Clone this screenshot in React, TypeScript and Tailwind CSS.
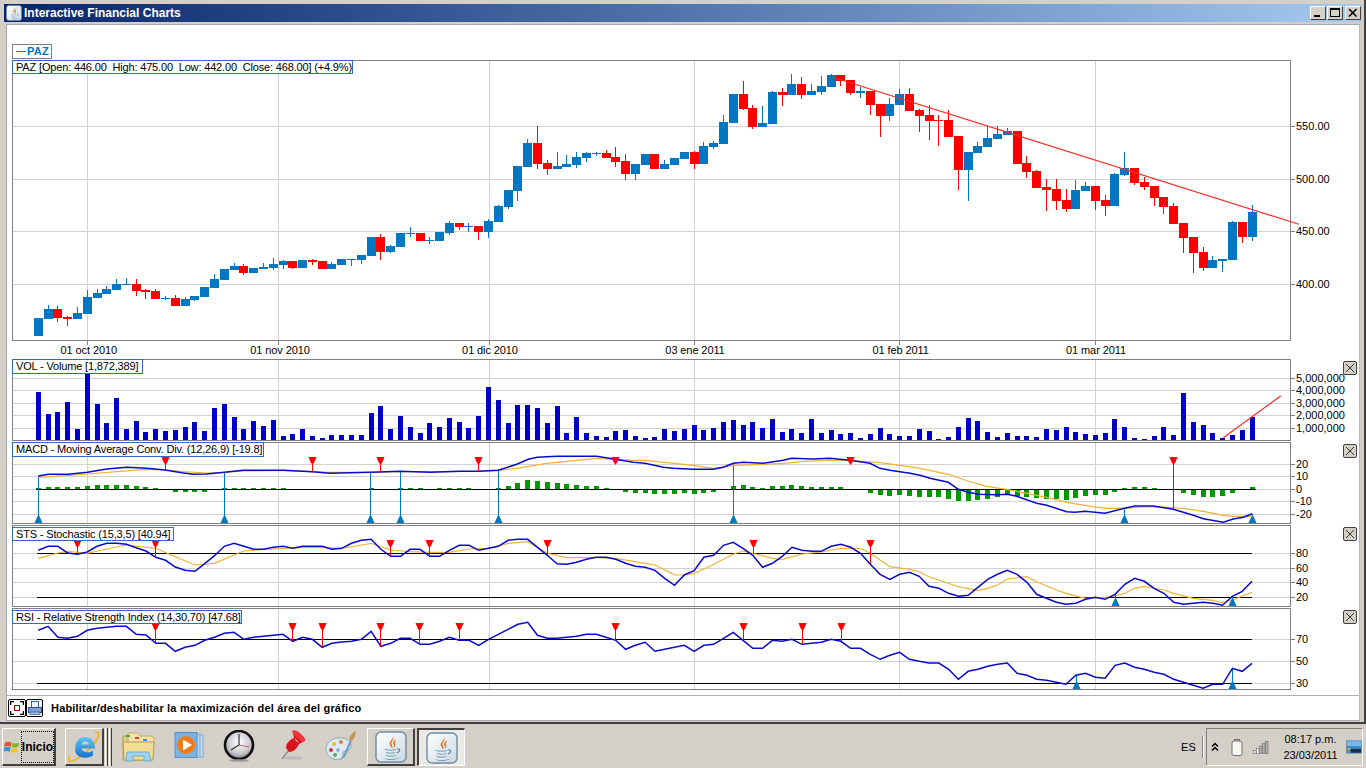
import React from "react";

const X = (i: number) => 38.3 + 9.788 * i;

// candles: colour, wick top, body top, body bottom, wick bottom (y in 3x units from y=60)
const candles: [string, number, number, number, number][] = [
["b",774,774,828,828],["b",735,747,777,777],["r",738,747,774,785],["r",768,771,777,798],["b",741,759,777,777],
["b",690,711,762,762],["b",687,699,714,714],["b",678,687,702,702],["b",657,672,690,690],["b",654,672,675,675],
["r",657,672,693,708],["r",687,690,696,717],["r",687,693,717,717],["b",708,714,717,720],["r",705,714,738,738],
["b",712,717,738,738],["b",708,708,720,723],["b",681,681,711,711],["b",642,657,684,684],["b",627,627,660,660],
["b",609,618,630,630],["r",612,618,639,645],["b",624,624,639,639],["b",609,621,627,627],["b",594,612,624,630],
["b",600,603,615,627],["r",603,603,624,627],["b",600,600,624,624],["r",597,600,606,615],["r",603,603,627,627],
["b",606,612,627,627],["b",597,597,615,615],["b",597,597,600,618],["b",585,585,600,612],["b",531,531,588,588],
["r",522,531,576,600],["b",555,558,576,579],["b",519,519,561,561],["b",501,519,522,531],["r",519,519,543,543],
["b",531,540,543,552],["b",516,516,543,543],["b",483,489,519,525],["r",489,489,501,510],["b",489,498,501,516],
["r",498,498,516,540],["b",477,483,516,534],["b",435,438,486,486],["b",390,390,441,447],["b",318,318,393,423],
["b",237,249,321,321],["r",198,249,312,327],["r",300,309,327,345],["b",276,318,327,327],["b",285,312,321,321],
["b",276,291,315,324],["b",276,279,294,306],["b",276,279,282,288],["r",270,279,294,294],["r",261,291,306,321],
["r",282,303,342,360],["b",312,312,342,360],["b",282,282,315,315],["r",282,282,327,327],["b",300,312,327,327],
["b",294,294,315,315],["b",276,276,297,297],["r",273,276,312,327],["b",246,258,312,312],["b",243,249,261,267],
["b",165,186,252,252],["b",102,102,189,189],["r",63,102,147,150],["r",135,144,201,207],["b",138,189,201,201],
["b",93,96,192,192],["r",84,96,105,138],["b",42,72,105,105],["r",51,72,105,117],["b",72,93,105,105],
["b",48,78,96,105],["b",42,45,81,81],["r",45,45,63,78],["r",60,60,99,105],["b",81,93,99,114],
["r",93,93,135,165],["r",132,132,168,231],["b",114,132,168,183],["b",87,102,135,135],["r",84,102,153,153],
["r",147,150,168,216],["r",135,165,183,240],["r",165,180,183,258],["r",150,180,231,231],["r",228,228,330,390],
["b",276,276,330,423],["b",246,258,279,279],["b",198,234,261,261],["b",198,222,237,237],["b",204,213,225,225],
["r",213,213,312,312],["r",288,309,336,354],["r",330,333,384,384],["r",357,381,390,453],["r",357,387,423,450],
["r",387,420,447,456],["b",360,390,447,447],["b",366,378,393,393],["r",378,378,423,450],["r",405,420,438,468],
["b",339,342,438,438],["b",276,324,345,348],["r",324,324,369,375],["r",351,366,381,390],["r",378,378,414,438],
["r",411,411,441,462],["r",429,438,492,492],["r",489,489,534,579],["r",531,531,579,639],["r",561,576,624,633],
["b",588,600,624,624],["b",597,597,603,636],["b",483,486,600,600],["r",486,486,531,549],["b",435,456,531,543],
];

const volTops = [111,177,171,141,222,54,147,204,129,222,198,231,222,228,225,216,201,228,159,147,186,222,198,213,195,243,237,222,243,249,240,240,240,240,174,153,222,183,216,234,204,216,189,
201,219,183,96,135,204,150,150,159,204,153,234,186,234,243,246,228,225,243,249,246,222,228,222,210,225,219,201,195,210,201,219,192,231,222,234,192,234,225,237,234,249,237,219,237,243,
243,222,228,252,246,216,189,198,231,246,234,243,243,246,222,225,216,231,237,240,234,192,216,249,252,243,216,240,114,201,210,234,249,240,225,186];

// MACD histogram in 3x units, 403 = zero line, 0 = nothing
const hist = [399,396,396,396,396,394,390,390,390,390,393,396,399,0,408,408,408,408,0,399,399,399,399,399,399,399,0,0,0,0,0,0,0,0,399,0,0,399,399,399,0,399,399,399,399,0,0,399,393,384,375,378,381,384,387,390,393,393,399,0,408,411,411,414,414,414,411,414,411,408,0,393,390,396,399,393,393,390,393,396,396,396,396,0,0,411,417,420,417,420,423,423,423,429,435,435,432,429,423,417,420,423,426,429,429,432,426,420,417,417,408,399,396,396,399,0,0,411,417,423,423,420,411,0,396];

const macdBlue: [number, number][] = [[38.3,476],[48.3,474.3],[68.3,474.3],[87.3,472.3],[106.7,469],[126.7,467.3],[146.7,468.3],[165.3,470],[183.3,473],[193.3,474.3],[206.7,474],[224.3,472.3],[243.3,470.3],[283.3,470.3],[312.3,471.7],[330,473.3],[370.3,472.3],[400.3,471.3],[430,472.3],[460,471.3],[478.3,471.3],[498.3,470.3],[516.7,464.3],[528.3,459.3],[537.3,457.3],[556.7,456.3],[596.7,456.3],[615.3,459.3],[633.3,462.3],[645,463.3],[663.3,467.3],[673.3,468.3],[693.3,469.3],[713.3,469.3],[723.3,467.3],[733.3,463.3],[743.3,462.3],[763.3,463.3],[783.3,460.3],[791.7,458.3],[813.3,459],[830,458.3],[850,460.3],[870,463.3],[880,468.3],[890,470.3],[910,473.3],[920,475.3],[930,478.3],[948.3,482.3],[958.3,489.3],[968.3,492.3],[978.3,494.3],[996.7,494.7],[1007.3,494.3],[1016.7,496.3],[1036.7,503.3],[1046.7,505.3],[1066.7,511.7],[1075,512.3],[1085,511.3],[1105,513.3],[1124.3,508.3],[1135,506],[1153.3,506],[1173.3,509.3],[1193.3,515.3],[1203.3,518.7],[1223.3,522.3],[1233.3,519],[1243.3,517.3],[1252.3,513.7]];
const macdOrange: [number, number][] = [[38.3,477.3],[66.7,475.7],[87.3,474],[116.7,471.7],[146.7,469.3],[165.3,470],[183.3,471.7],[206.7,473],[224.3,472.3],[243.3,471],[283.3,470.3],[330,472.3],[370.3,472.3],[400.3,471.7],[478.3,471.3],[498.3,470.3],[516.7,468.3],[546.7,463.3],[576.7,460.3],[596.7,458.3],[615.3,459.3],[633.3,460.3],[645,460.3],[693.3,465.3],[713.3,468.3],[733.3,465.3],[763.3,464.3],[783.3,463.3],[803.3,461.3],[830,460.3],[850,460.3],[880,462.7],[900,465.3],[920,468.3],[948.3,474.3],[968.3,481.3],[986.7,486.3],[1006.7,489.3],[1026.7,493.3],[1046.7,497.3],[1066.7,502.3],[1085,505.3],[1105,508.3],[1124.3,508.3],[1143.3,507],[1163.3,507],[1183.3,508.3],[1203.3,511.3],[1223.3,515.3],[1233.3,516.3],[1252.3,516.3]];

const stsBlue = [76,64,64,84,88,81,64,55,55,58,68,78,97,106,126,136,139,116,92,64,55,64,73,73,67,64,70,64,64,64,73,70,55,46,43,73,94,94,73,73,94,94,76,61,61,76,70,64,46,43,43,67,91,116,118,112,103,97,97,103,115,124,127,136,160,181,150,137,97,91,61,52,70,91,127,115,94,67,76,79,79,64,58,67,85,118,148,163,148,142,154,184,190,205,214,211,187,163,148,136,148,172,208,220,232,238,235,223,217,223,208,178,160,169,190,205,232,238,235,232,235,241,214,199,169];
const stsOrangeKeys: [number, number][] = [[0,100],[2,84],[3,79],[5,85],[7,72],[9,60],[12,70],[14,95],[16,120],[18,115],[20,90],[21,78],[23,73],[27,68],[29,68],[31,70],[33,60],[34,55],[36,75],[38,80],[40,82],[42,82],[44,72],[46,70],[48,55],[50,50],[52,85],[54,98],[57,98],[59,100],[62,115],[63,120],[64,135],[65,150],[66,150],[67,146],[69,118],[71,88],[72,78],[73,85],[75,100],[76,104],[78,87],[80,81],[82,70],[84,70],[85,85],[87,125],[89,133],[90,140],[91,155],[92,165],[94,185],[96,197],[97,190],[98,180],[99,162],[101,155],[102,170],[104,195],[105,205],[107,220],[109,217],[110,213],[111,205],[112,190],[113,184],[115,195],[116,205],[118,220],[120,226],[121,233],[122,225],[124,202]];
const rsiBlue = [316,304,337,340,334,316,310,307,304,304,328,330,355,355,379,367,361,346,337,325,322,343,337,334,331,328,349,337,343,367,355,351,349,343,319,364,355,340,340,358,358,349,337,346,346,361,343,328,313,298,292,331,340,340,337,334,328,328,337,346,373,361,352,379,373,367,361,379,361,358,340,322,346,370,370,346,349,343,358,355,352,343,349,370,370,388,403,391,382,403,409,414,414,433,463,439,433,424,418,414,445,451,463,466,472,478,451,445,457,460,421,414,427,433,442,448,463,472,481,490,478,478,430,439,415];

const GRID = "#d2d2d2";
const BLUE = "#0077c0";
const RED = "#ff0000";
const LINE = "#0a0acb";
const ORANGE = "#f2b230";
const VGRID = [87, 278, 489, 694, 899, 1095];

const pts = (p: [number, number][]) => p.map((q) => q.join(",")).join(" ");
const idxPts = (arr: number[], y0: number) => arr.map((z, i) => `${X(i).toFixed(1)},${(y0 + z / 3).toFixed(1)}`).join(" ");

function Frame({ top, bottom }: { top: number; bottom: number }) {
  return (
    <>
      <rect x={12} y={top} width={1279} height={1} fill="#808080" />
      <rect x={12} y={bottom} width={1279} height={1} fill="#808080" />
      <rect x={12} y={top} width={1} height={bottom - top + 1} fill="#808080" />
      <rect x={1290} y={top} width={1} height={bottom - top + 1} fill="#808080" />
    </>
  );
}

function VGrid({ top, bottom }: { top: number; bottom: number }) {
  return (
    <>
      {VGRID.map((x) => (
        <rect key={x} x={x} y={top} width={1} height={bottom - top} fill={GRID} />
      ))}
    </>
  );
}

function HGrid({ ys }: { ys: [number, string][] }) {
  return (
    <>
      {ys.map(([y, t]) => (
        <g key={t}>
          <rect x={13} y={y} width={1277} height={1} fill={GRID} />
          <rect x={1291} y={y} width={4} height={1} fill="#808080" />
          <text x={1296} y={y + 4} fontSize={11} fill="#000">
            {t}
          </text>
        </g>
      ))}
    </>
  );
}

function DownMark({ x, top, end }: { x: number; top: number; end: number }) {
  const l = Math.round(x);
  return (
    <g>
      <rect x={l} y={top} width={1} height={end - top} fill={RED} shapeRendering="crispEdges" />
      <polygon points={`${l - 3.5},${top} ${l + 4.5},${top} ${l + 2.5},${top + 5} ${l + 0.5},${top + 8} ${l - 1.5},${top + 5}`} fill={RED} />
    </g>
  );
}

function UpMark({ x, top, bottom }: { x: number; top: number; bottom: number }) {
  const l = Math.round(x);
  return (
    <g>
      <rect x={l} y={top} width={1} height={bottom - top} fill={BLUE} shapeRendering="crispEdges" />
      <polygon points={`${l - 3.5},${bottom} ${l + 4.5},${bottom} ${l + 0.5},${bottom - 9}`} fill={BLUE} />
    </g>
  );
}

function Chart({ top, height, children }: { top: number; height: number; children: React.ReactNode }) {
  return (
    <svg
      width={1353}
      height={height}
      viewBox={`7 ${top} 1353 ${height}`}
      className="block overflow-hidden"
      fontFamily="'Liberation Sans', Arial, sans-serif"
    >
      {children}
    </svg>
  );
}

function Tag({ className, children }: { className: string; children: React.ReactNode }) {
  return (
    <div className={`absolute z-10 bg-white border border-[#316ac5] text-black text-[11px] leading-[12px] tracking-[-0.16px] pl-[3px] whitespace-pre ${className}`}>
      {children}
    </div>
  );
}

function CloseBtn({ className }: { className: string }) {
  return (
    <button className={`absolute z-10 w-[14px] h-[14px] rounded-[2px] border border-[#404040] bg-[#d4d0c8] flex items-center justify-center p-0 ${className}`}>
      <svg width="10" height="10" viewBox="0 0 10 10">
        <path d="M1 1 L9 9 M9 1 L1 9" stroke="#333" strokeWidth="1" fill="none" />
      </svg>
    </button>
  );
}

function WinBtn({ kind }: { kind: "min" | "max" | "close" }) {
  return (
    <div className="w-[16px] h-[14px] bg-[#d4d0c8] border-t border-l border-t-white border-l-white border-r border-b border-r-[#404040] border-b-[#404040] flex items-center justify-center">
      <svg width="12" height="10" viewBox="0 0 12 10">
        {kind === "min" && <rect x="2" y="7" width="6" height="2" fill="#000" />}
        {kind === "max" && (
          <>
            <rect x="1.5" y="0.5" width="9" height="8" fill="none" stroke="#000" />
            <rect x="1" y="0" width="10" height="2" fill="#000" />
          </>
        )}
        {kind === "close" && <path d="M2 1 L9.5 8.5 M9.5 1 L2 8.5" stroke="#000" strokeWidth="1.6" fill="none" />}
      </svg>
    </div>
  );
}

function JavaIcon({ size, id }: { size: number; id: string }) {
  return (
    <svg width={size} height={size} viewBox="0 0 32 32">
      <defs>
        <linearGradient id={id} x1="0" y1="0" x2="1" y2="1">
          <stop offset="0" stopColor="#ffffff" />
          <stop offset="1" stopColor="#c9d8e4" />
        </linearGradient>
      </defs>
      <rect x="1" y="1" width="30" height="30" rx="5" fill={`url(#${id})`} stroke="#6d8ba3" strokeWidth="1.4" />
      <path d="M17.5 4 C20 8 13 10 15 14 C15.8 15.5 17 16.5 17 18 C18.5 15.5 16 13.5 16.5 11.5 C17 9.5 20 8 17.5 4Z" fill="#e2711d" />
      <path d="M21 8.5 C18.5 10 17.5 11.5 18.5 13.5 C19 14.5 19.5 15.5 19 17 C21 15 20 13 20 12 C20 10.5 21 9.5 21 8.5Z" fill="#e2711d" />
      <path d="M9 18 C11 19 20 19 22 18 C20 20 11 20 9 18Z" fill="#5382a1" />
      <path d="M10.5 21 C13 22 19 22 21 21 C19 23 12 23 10.5 21Z" fill="#5382a1" />
      <path d="M10 24 C13 25 19 25 21.5 24 C19 26 12 26 10 24Z" fill="#5382a1" />
      <path d="M8 27 C12 28.5 20 28.5 25 26.5 C21 29.5 11 29.5 8 27Z" fill="#5382a1" />
      <path d="M22 18 C25 17 26 20 22 22" fill="none" stroke="#5382a1" strokeWidth="1.1" />
    </svg>
  );
}

function WinLogo() {
  return (
    <svg width="16" height="16" viewBox="0 0 16 16">
      <path d="M1 3.5 C3 2.5 5 2.5 7.5 3.5 L6.7 7.7 C4.5 6.7 2.5 6.8 0.3 7.7Z" fill="#e8532c" />
      <path d="M8.3 3.8 C10.5 4.8 12.5 4.6 15 3.4 L14.2 7.8 C12 8.8 10 8.8 7.5 8Z" fill="#7cb82f" />
      <path d="M0.2 8.6 C2.5 7.6 4.5 7.6 6.5 8.6 L5.8 12.7 C3.5 11.7 1.5 11.9 -0.4 12.8Z" fill="#3d8fd6" />
      <path d="M7.4 9 C9.8 9.8 12 9.6 14 8.8 L13.2 13 C11 14 9 14 6.7 13Z" fill="#f5c22e" />
    </svg>
  );
}

function IEIcon() {
  return (
    <svg width="32" height="34" viewBox="0 0 32 34">
      <defs>
        <linearGradient id="iee" x1="0" y1="0" x2="0" y2="1">
          <stop offset="0" stopColor="#5cc8f5" />
          <stop offset="1" stopColor="#1a6fc9" />
        </linearGradient>
        <linearGradient id="ier" x1="0" y1="0" x2="1" y2="1">
          <stop offset="0" stopColor="#f7dc4a" />
          <stop offset="1" stopColor="#e39a1a" />
        </linearGradient>
      </defs>
      <path d="M27 3 C31 1 32 4 29 9 C25 17 12 29 4 31 C0 32 0 29 2 25" fill="none" stroke="url(#ier)" strokeWidth="2" />
      <path d="M7.5 17 C7.5 11 11.5 7 17 7 C22.5 7 27 11 27 18.5 L13.5 18.5 C14 22.5 21 23.5 25 20.5 L25 25.5 C18 30 5 28 7.5 17Z M13.5 14.5 L21 14.5 C20.5 10.5 14.5 10.5 13.5 14.5Z" fill="url(#iee)" fillRule="evenodd" />
    </svg>
  );
}

function FolderIcon() {
  return (
    <svg width="33" height="30" viewBox="0 0 33 30">
      <path d="M1 4 L12 4 L14 7 L29 7 L29 28 L1 28Z" fill="#e8cf80" stroke="#b19a55" />
      <path d="M6 1 L16 1 L18 4 L29 4 L32 6 L32 12 L6 12Z" fill="#f3e3a6" stroke="#b19a55" strokeWidth="0.7" />
      <rect x="4" y="3" width="4" height="2" fill="#2fb23a" />
      <rect x="13" y="5" width="4" height="2" fill="#d9402b" />
      <rect x="21" y="7" width="4" height="2" fill="#2f8fd9" />
      <path d="M1 10 L32 10 L31 28 L2 28Z" fill="#f2dd94" stroke="#b19a55" />
      <path d="M5 20 L27 20 L29 29 L22 29 L22 24 L11 24 L11 29 L4 29Z" fill="#9ed3ea" stroke="#5ea1c4" strokeWidth="0.8" />
    </svg>
  );
}

function MediaIcon() {
  return (
    <svg width="31" height="28" viewBox="0 0 31 28">
      <rect x="8" y="3" width="21" height="22" fill="#c7dff3" stroke="#7fa9cf" />
      <rect x="5" y="2" width="21" height="23" fill="#b6d5ee" stroke="#7fa9cf" />
      <rect x="1" y="0.5" width="22" height="25" fill="#7db2e0" stroke="#5a8fc2" />
      <circle cx="12" cy="13" r="9" fill="#f47b14" />
      <path d="M9 7.5 L18 13 L9 18.5Z" fill="#ffffff" />
    </svg>
  );
}

function ClockIcon() {
  return (
    <svg width="32" height="32" viewBox="0 0 32 32">
      <defs>
        <radialGradient id="clk" cx="0.5" cy="0.4" r="0.6">
          <stop offset="0" stopColor="#ffffff" />
          <stop offset="0.7" stopColor="#c9c6cb" />
          <stop offset="1" stopColor="#7b7a80" />
        </radialGradient>
      </defs>
      <circle cx="16" cy="15" r="14" fill="url(#clk)" stroke="#111" strokeWidth="2.6" />
      <path d="M16 4 L16 15 L8 20" fill="none" stroke="#333" strokeWidth="1.2" />
      <path d="M16 15 L26 17" fill="none" stroke="#a33" strokeWidth="0.7" />
      <ellipse cx="16" cy="30.5" rx="10" ry="1.3" fill="#999" />
    </svg>
  );
}

function PinIcon() {
  return (
    <svg width="26" height="32" viewBox="0 0 26 32">
      <ellipse cx="13" cy="29" rx="10" ry="1.6" fill="#bbb" />
      <path d="M2 30 L9 21" stroke="#888" strokeWidth="1.3" />
      <path d="M13 4 L23 13 L19 15 C17 20 13 23 9 23 L6 19 C6 15 9 11 14 9Z" fill="#d8151b" />
      <path d="M13 1.5 C16 0 23 6 25 10 C25.5 12 24 13.5 22 13 L13 5 C12 3.5 12 2 13 1.5Z" fill="#f0353a" />
      <path d="M15 10 L18 13" stroke="#ff9a9a" strokeWidth="1.3" />
    </svg>
  );
}

function PaletteIcon() {
  return (
    <svg width="33" height="32" viewBox="0 0 33 32">
      <path d="M2 20 C1 12 10 7 18 8 C25 9 29 14 26 19 C24 22 21 20 19 22 C18 25 20 27 16 29 C10 31 3 27 2 20Z" fill="#dfe9f3" stroke="#8fa7bd" />
      <circle cx="10" cy="14" r="2" fill="#e0c22b" />
      <circle cx="17" cy="12" r="2" fill="#d28d2a" />
      <circle cx="7" cy="20" r="2" fill="#cc3b3b" />
      <circle cx="14" cy="20" r="1.7" fill="#6fa8d8" />
      <circle cx="11" cy="25" r="2" fill="#55b24c" />
      <path d="M16 30 L19 26 L26 10 L28 11 L21 27Z" fill="#7a9ac2" />
      <path d="M25 9 C26 5 29 2 32 1 C32 5 30 9 28 11Z" fill="#c69752" />
    </svg>
  );
}

const raised = "bg-[#d4d0c8] border-t border-l border-t-white border-l-white border-r-2 border-b-2 border-r-[#404040] border-b-[#404040]";

function MaxIcon() {
  return (
    <div className="w-[18px] h-[18px] rounded-[2px] border border-black bg-white flex items-center justify-center">
      <svg width="14" height="14" viewBox="0 0 14 14">
        <path d="M0.5 4 V0.5 H4 M10 0.5 H13.5 V4 M13.5 10 V13.5 H10 M4 13.5 H0.5 V10" stroke="#000" strokeWidth="1.6" fill="none" />
        <rect x="4.5" y="4.5" width="5" height="5" fill="none" stroke="#a00000" />
      </svg>
    </div>
  );
}

function PrintIcon() {
  return (
    <div className="w-[17px] h-[18px] rounded-[2px] border border-black bg-white flex items-center justify-center">
      <svg width="14" height="14" viewBox="0 0 14 14">
        <rect x="3.5" y="0.5" width="7" height="6" fill="#eaf1fb" stroke="#3a62a8" />
        <rect x="0.5" y="6.5" width="13" height="5" fill="#7d9fd3" stroke="#2a4f92" />
        <rect x="2" y="11" width="10" height="2.5" fill="#a9c1e6" stroke="#2a4f92" strokeWidth="0.7" />
      </svg>
    </div>
  );
}

function Chevrons() {
  return (
    <svg width="8" height="10" viewBox="0 0 8 10">
      <path d="M1 4.5 L4 1.5 L7 4.5 M1 8.5 L4 5.5 L7 8.5" stroke="#000" strokeWidth="1.5" fill="none" />
    </svg>
  );
}

function Battery() {
  return (
    <svg width="12" height="17" viewBox="0 0 12 17">
      <rect x="3.5" y="0.5" width="5" height="2" fill="#c8c8c8" stroke="#6f6f6f" />
      <rect x="1" y="2" width="10" height="14.5" rx="2" fill="#f7f7f4" stroke="#6f6f6f" />
    </svg>
  );
}

function Signal() {
  return (
    <svg width="16" height="13" viewBox="0 0 16 13">
      <rect x="0.5" y="9.5" width="2.5" height="3" fill="#fff" stroke="#777" strokeWidth="0.7" />
      <rect x="3.5" y="7.5" width="2.5" height="5" fill="#fff" stroke="#777" strokeWidth="0.7" />
      <rect x="6.5" y="5" width="2.5" height="7.5" fill="#b0b0aa" stroke="#777" strokeWidth="0.7" />
      <rect x="9.5" y="2.5" width="2.5" height="10" fill="#b0b0aa" stroke="#777" strokeWidth="0.7" />
      <rect x="12.5" y="0.5" width="2.5" height="12" fill="#b0b0aa" stroke="#777" strokeWidth="0.7" />
    </svg>
  );
}

function Desktop() {
  return (
    <svg width="16" height="14" viewBox="0 0 17 14">
      <rect x="0.5" y="0.5" width="16" height="13" fill="#3b88d6" stroke="#6d8fae" />
      <rect x="1" y="1" width="15" height="5" fill="#7cb7ec" />
      <rect x="5" y="9" width="11" height="4" fill="#1d2f44" />
      <rect x="2" y="8" width="2" height="2" fill="#e9c22e" />
      <rect x="2" y="10.5" width="2" height="2" fill="#56b344" />
    </svg>
  );
}

export default function App() {
  const stsOrange = stsOrangeKeys.map(([i, z]) => `${X(i).toFixed(1)},${(525 + z / 3).toFixed(1)}`).join(" ");
  return (
    <div className="w-[1366px] h-[768px] overflow-hidden flex flex-col bg-[#d4d0c8] font-['Liberation_Sans',Arial,sans-serif] select-none">
      {/* window */}
      <div className="h-[724px] shrink-0 border-b-2 border-b-[#404040] border-r-2 border-r-[#404040] pt-[4px] pl-[4px] pr-[2px] flex flex-col">
        {/* title bar */}
        <div className="h-[18px] shrink-0 flex items-center bg-gradient-to-r from-[#0a246a] to-[#a6caf0] pl-[2px] pr-[1px]">
          <JavaIcon size={16} id="javat" />
          <span className="ml-[2px] text-white font-bold text-[12px] leading-[18px]">Interactive Financial Charts</span>
          <div className="ml-auto flex items-center">
            <WinBtn kind="min" />
            <div className="w-[1px]" />
            <WinBtn kind="max" />
            <div className="w-[2px]" />
            <WinBtn kind="close" />
          </div>
        </div>
        {/* client */}
        <div className="mt-[2px] ml-[2px] mr-[2px] h-[697px] border border-[#a8a8a8] border-r-[#b8b8b8] bg-white flex flex-col">
          <div className="h-[34px] shrink-0 flex items-end">
            <div className="ml-[5px] w-[40px] h-[15px] border border-[#808080] flex items-center pl-[3px]">
              <div className="w-[10px] h-[1px] bg-[#0077c0]" />
              <span className="ml-[1px] text-[11px] leading-[13px] font-bold text-[#0077c0] tracking-[0.3px]">PAZ</span>
            </div>
          </div>

          {/* price panel */}
          <div className="relative shrink-0">
            <Tag className="left-[5px] top-[1px] w-[341px] h-[14px]">{"PAZ [Open: 446.00  High: 475.00  Low: 442.00  Close: 468.00] (+4.9%)"}</Tag>
            <Chart top={59} height={300}>
              <VGrid top={60} bottom={341} />
              <HGrid ys={[[126, "550.00"], [179, "500.00"], [231, "450.00"], [284, "400.00"]]} />
              {candles.map(([c, wt, bt, bb, wb], i) => {
                const left = Math.round(X(i) - 4.5);
                const col = c === "b" ? BLUE : RED;
                const yy = (z: number) => Math.round(60 + z / 3);
                return (
                  <g key={i} shapeRendering="crispEdges" fill={col}>
                    <rect x={left + 4} y={yy(wt)} width={1} height={Math.max(yy(wb) - yy(wt), 1)} />
                    <rect x={left} y={yy(bt)} width={9} height={Math.max(yy(bb) - yy(bt), 1)} />
                  </g>
                );
              })}
              <Frame top={60} bottom={340} />
              {VGRID.map((x) => (
                <rect key={x} x={x} y={341} width={1} height={4} fill="#808080" />
              ))}
              <line x1={832} y1={77} x2={1298.7} y2={224.3} stroke="#ff2a2a" strokeWidth={1.2} />
              {[[88.8, "01 oct 2010"], [280, "01 nov 2010"], [490, "01 dic 2010"], [695, "03 ene 2011"], [900.7, "01 feb 2011"], [1096, "01 mar 2011"]].map(([x, t]) => (
                <text key={t as string} x={x as number} y={354} fontSize={11} textAnchor="middle" fill="#000" letterSpacing={-0.1}>
                  {t}
                </text>
              ))}
            </Chart>
          </div>

          {/* volume panel */}
          <div className="relative shrink-0">
            <Tag className="left-[5px] top-0 w-[131px] h-[15px]">VOL - Volume [1,872,389]</Tag>
            <CloseBtn className="left-[1336px] top-[2px]" />
            <Chart top={359} height={82}>
              <VGrid top={360} bottom={440} />
              <HGrid ys={[[378, "5,000,000"], [390, "4,000,000"], [403, "3,000,000"], [415, "2,000,000"], [428, "1,000,000"]]} />
              <g shapeRendering="crispEdges" fill="#0000cc">
                {volTops.map((z, i) => {
                  const t = Math.round(355 + z / 3);
                  return <rect key={i} x={Math.round(X(i) - 2.5)} y={t} width={5} height={440 - t} />;
                })}
              </g>
              <Frame top={359} bottom={440} />
              <line x1={1223.3} y1={437.7} x2={1280.7} y2={396} stroke="#ff2a2a" strokeWidth={1.2} />
            </Chart>
          </div>

          {/* MACD panel */}
          <div className="relative shrink-0">
            <Tag className="left-[5px] top-[1px] w-[252px] h-[15px]">MACD - Moving Average Conv. Div. (12,26,9) [-19.8]</Tag>
            <CloseBtn className="left-[1336px] top-[3px]" />
            <Chart top={441} height={84}>
              <VGrid top={442} bottom={523} />
              <HGrid ys={[[464, "20"], [476, "10"], [489, "0"], [501, "-10"], [514, "-20"]]} />
              <Frame top={442} bottom={523} />
              <rect x={36} y={489} width={1220} height={1} fill="#000" />
              <g shapeRendering="crispEdges" fill="#009900">
                {hist.map((z, i) => {
                  if (!z) return null;
                  const d = Math.round((z - 403) / 3);
                  const left = Math.round(X(i) - 2.5);
                  return d < 0 ? (
                    <rect key={i} x={left} y={489 + d} width={5} height={-d} />
                  ) : (
                    <rect key={i} x={left} y={490} width={5} height={d} />
                  );
                })}
              </g>
              {[[38.3, 476], [224.3, 472.3], [370.3, 472.3], [400.3, 471.3], [498.3, 470.3], [733.3, 463.3], [1124.3, 508.3], [1252.3, 513.7]].map(([x, y]) => (
                <UpMark key={x} x={x} top={y} bottom={523} />
              ))}
              <polyline points={pts(macdOrange)} fill="none" stroke={ORANGE} strokeWidth={1.2} />
              <polyline points={pts(macdBlue)} fill="none" stroke={LINE} strokeWidth={1.5} />
              {[[165.3, 470], [312.3, 471.7], [380.3, 472.3], [478.3, 471.3], [615.3, 461], [850, 461], [1173.3, 509.3]].map(([x, y]) => (
                <DownMark key={x} x={x} top={457} end={y} />
              ))}
            </Chart>
          </div>

          {/* STS panel */}
          <div className="relative shrink-0">
            <Tag className="left-[5px] top-[2px] w-[162px] h-[14px]">STS - Stochastic (15,3,5) [40.94]</Tag>
            <CloseBtn className="left-[1336px] top-[2px]" />
            <Chart top={525} height={82}>
              <VGrid top={526} bottom={606} />
              <HGrid ys={[[553, "80"], [568, "60"], [582, "40"], [597, "20"]]} />
              <Frame top={525} bottom={606} />
              <rect x={37} y={553} width={1215} height={1} fill="#000" />
              <rect x={37} y={597} width={1215} height={1} fill="#000" />
              <polyline points={stsOrange} fill="none" stroke={ORANGE} strokeWidth={1.2} />
              {[[1115.3, 594], [1232, 596]].map(([x, y]) => (
                <UpMark key={x} x={x} top={y} bottom={606} />
              ))}
              <polyline points={idxPts(stsBlue, 525)} fill="none" stroke={LINE} strokeWidth={1.5} />
              {[[77.2, 554], [154.8, 557], [390.3, 556], [429.3, 556], [547.3, 555], [752.6, 554], [870.3, 564]].map(([x, y]) => (
                <DownMark key={x} x={x} top={540} end={y} />
              ))}
            </Chart>
          </div>

          {/* RSI panel */}
          <div className="relative shrink-0">
            <Tag className="left-[5px] top-[3px] w-[230px] h-[14px]">RSI - Relative Strength Index (14,30,70) [47.68]</Tag>
            <CloseBtn className="left-[1336px] top-[3px]" />
            <Chart top={607} height={88}>
              <VGrid top={609} bottom={689} />
              <HGrid ys={[[639, "70"], [661, "50"], [683, "30"]]} />
              <Frame top={608} bottom={689} />
              <rect x={37} y={639} width={1215} height={1} fill="#000" />
              <rect x={37} y={683} width={1215} height={1} fill="#000" />
              {[[1075.5, 675], [1232, 668]].map(([x, y]) => (
                <UpMark key={x} x={x} top={y} bottom={689} />
              ))}
              <polyline points={idxPts(rsiBlue, 525)} fill="none" stroke={LINE} strokeWidth={1.5} />
              {[[155.2, 643], [292.3, 641], [322.2, 647], [380.3, 646], [419.3, 644], [459.2, 640], [615.3, 640], [743.4, 640], [801.6, 644], [840.5, 641]].map(([x, y]) => (
                <DownMark key={x} x={x} top={623} end={y} />
              ))}
            </Chart>
          </div>

          {/* status row */}
          <div className="flex-1 border-t border-t-[#b0b0b0] flex items-center pl-[1px]">
            <MaxIcon />
            <PrintIcon />
            <span className="ml-[8px] text-[11px] leading-[14px] font-bold text-black tracking-[0.185px]">Habilitar/deshabilitar la maximización del área del gráfico</span>
          </div>
        </div>
      </div>

      {/* taskbar */}
      <div className="flex-1 flex items-start pt-[4px] pl-[2px]">
        <div className={`${raised} w-[54px] h-[38px] shrink-0 flex items-center`}>
          <div className="ml-[1px]">
            <WinLogo />
          </div>
          <div className="ml-[1px] w-[33px] h-[32px] border border-dotted border-black flex items-center justify-center text-[12px] font-bold text-black">Inicio</div>
        </div>
        <div className={`${raised} ml-[9px] w-[39px] h-[38px] shrink-0 flex items-center justify-center`}>
          <IEIcon />
        </div>
        <div className="ml-[1px] w-[3px] h-[38px] border-l border-r border-l-white border-r-[#404040]" />
        <div className="ml-[1px] w-[3px] h-[38px] border-l border-r border-l-white border-r-[#404040]" />
        <div className="ml-[10px] mt-[4px] shrink-0"><FolderIcon /></div>
        <div className="ml-[19px] mt-[4px] shrink-0"><MediaIcon /></div>
        <div className="ml-[18px] mt-[2px] shrink-0"><ClockIcon /></div>
        <div className="ml-[25px] mt-[1px] shrink-0"><PinIcon /></div>
        <div className="ml-[18px] mt-[2px] shrink-0"><PaletteIcon /></div>
        <div className={`${raised} ml-[10px] w-[48px] h-[38px] shrink-0 flex items-center justify-center`}>
          <JavaIcon size={32} id="javab1" />
        </div>
        <div className="ml-[2px] w-[48px] h-[38px] shrink-0 border-t-2 border-l-2 border-t-[#404040] border-l-[#404040] border-r border-b border-r-white border-b-white bg-[#eceae4] flex items-center justify-center">
          <JavaIcon size={32} id="javab2" />
        </div>
        <div className="ml-auto flex items-center h-[38px]">
          <span className="text-[11px] text-black tracking-[0.2px]">ES</span>
          <div className="ml-[6px] w-[2px] h-[22px] border-l border-r border-l-[#808080] border-r-white" />
          <div className="ml-[2px] mr-[3px] w-[157px] h-[38px] border border-t-[#808080] border-l-[#808080] border-r-white border-b-white flex items-center">
            <div className="ml-[4px]"><Chevrons /></div>
            <div className="ml-[12px]"><Battery /></div>
            <div className="ml-[10px]"><Signal /></div>
            <div className="ml-[14px] w-[55px] flex flex-col items-center text-[11px] leading-[16px] text-black">
              <span>08:17 p.m.</span>
              <span>23/03/2011</span>
            </div>
            <div className="ml-[8px]"><Desktop /></div>
          </div>
        </div>
      </div>
    </div>
  );
}
